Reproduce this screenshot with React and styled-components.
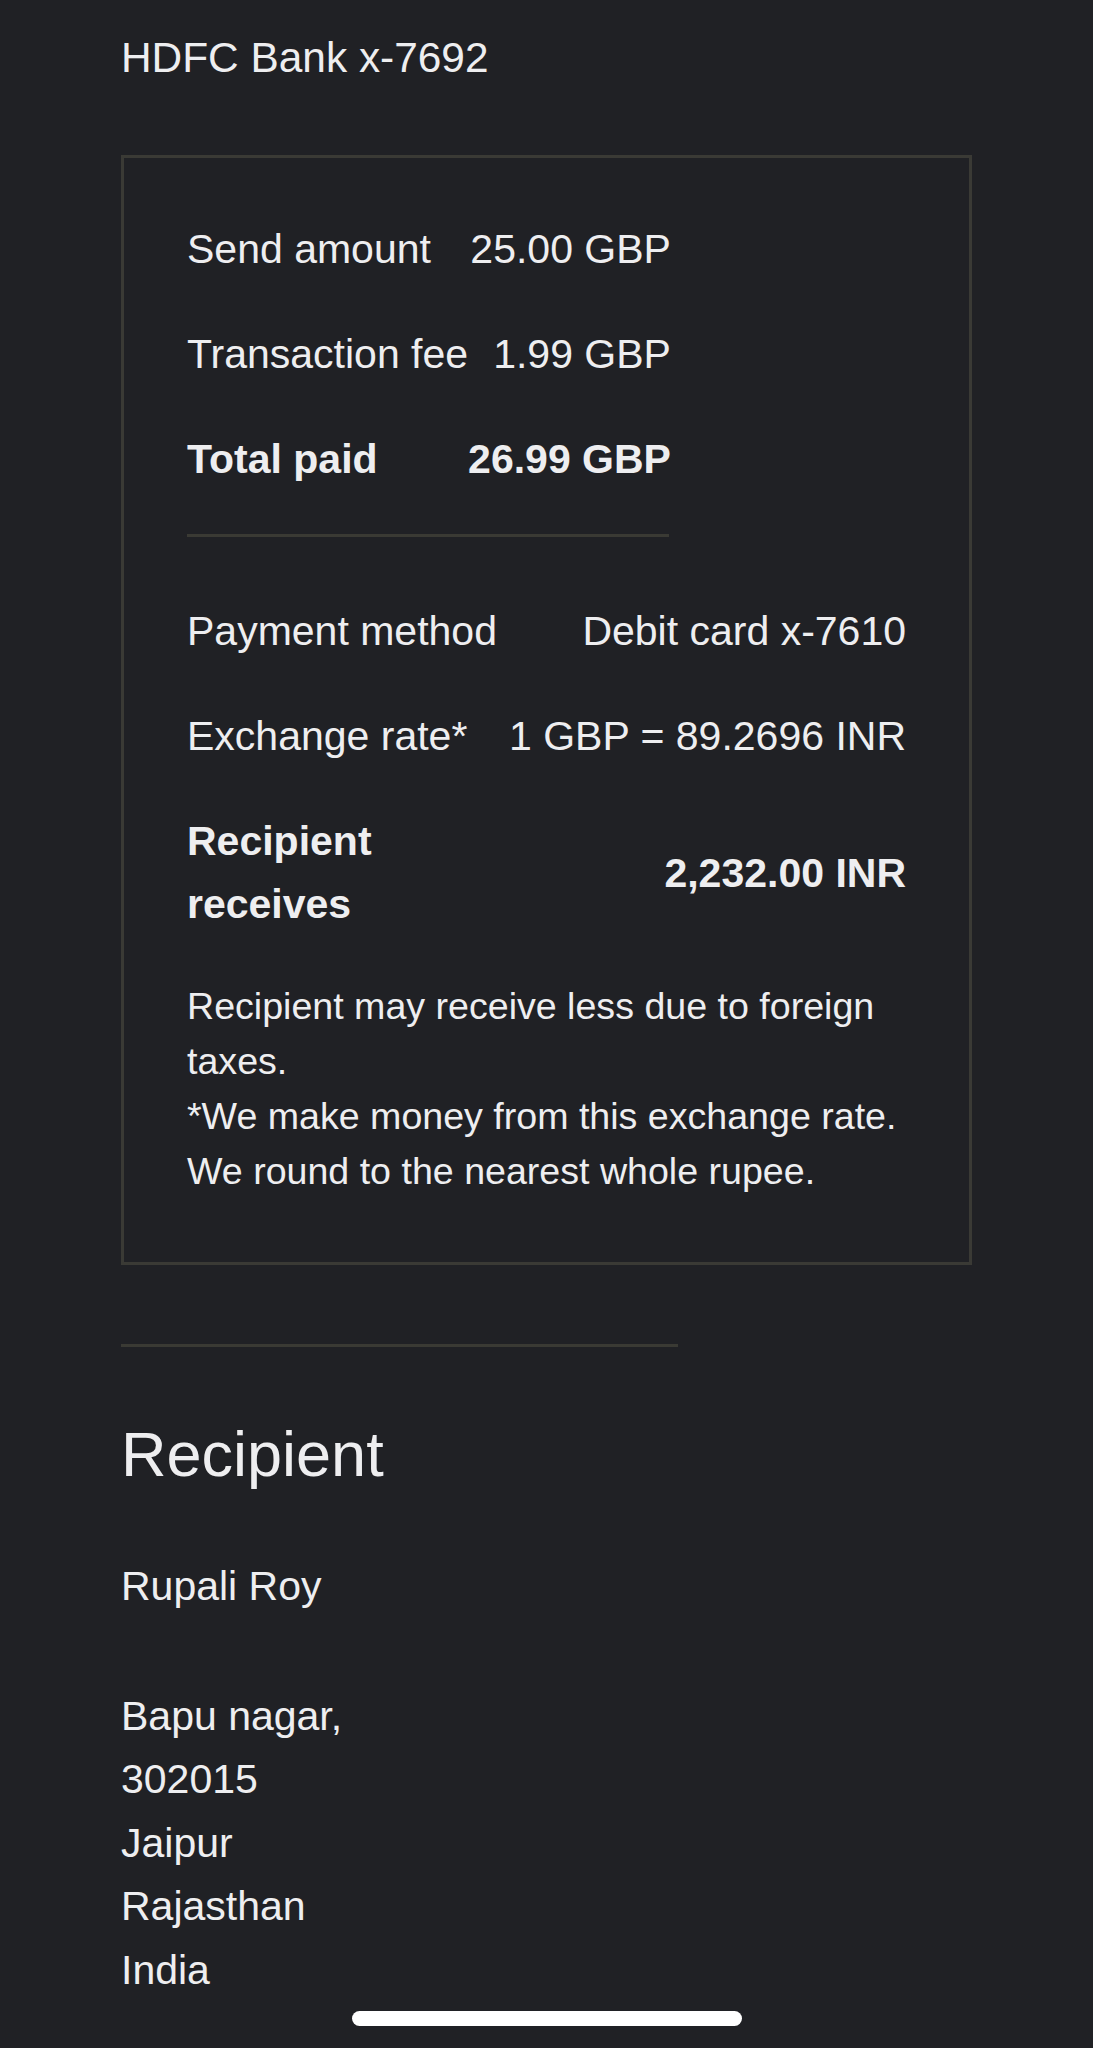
import { Fragment } from "react";
import styled, { createGlobalStyle } from "styled-components";

const GlobalStyle = createGlobalStyle`
  html, body {
    margin: 0;
    background: #202125;
  }
  body {
    color: #eeeef0;
    font-family: "Liberation Sans", Arial, sans-serif;
    font-size: 41px;
    line-height: 63px;
  }
`;

const Page = styled.div`
  padding: 26px 121px 48px;
`;

const BankName = styled.div`
  font-size: 42.4px;
  line-height: 63px;
`;

const SummaryBox = styled.section`
  box-sizing: border-box;
  width: 851px;
  margin-top: 66px;
  border: 3px solid #3a3a35;
  padding: 60px 63px 63px;
`;

const AmountGrid = styled.div`
  display: grid;
  grid-template-columns: ${(p) => p.$cols || "auto 1fr"};
  width: ${(p) => p.$width}px;
  row-gap: 42px;
  align-items: center;
  line-height: 63px;
`;

const Label = styled.div`
  font-weight: ${(p) => (p.$bold ? 700 : 400)};
  white-space: ${(p) => (p.$wrap ? "normal" : "nowrap")};
`;

const Value = styled.div`
  text-align: right;
  white-space: nowrap;
  font-weight: ${(p) => (p.$bold ? 700 : 400)};
`;

const Rule = styled.hr`
  border: 0;
  height: 3px;
  background: #3a3a34;
  width: ${(p) => p.$width}px;
  margin: ${(p) => p.$margin};
`;

const Notes = styled.p`
  width: 719px;
  margin: 43px 0 0;
  font-size: 37.6px;
  line-height: 55px;
`;

const Heading = styled.h2`
  margin: 70px 0 0;
  font-size: 63px;
  line-height: 75px;
  font-weight: 400;
`;

const Name = styled.div`
  margin-top: 63px;
`;

const Address = styled.address`
  margin-top: 67px;
  font-style: normal;
  line-height: 63.4px;
`;

const HomeIndicator = styled.div`
  position: fixed;
  left: 352px;
  bottom: 22px;
  width: 390px;
  height: 15px;
  border-radius: 8px;
  background: #ffffff;
`;

const amounts = [
  { label: "Send amount", value: "25.00 GBP" },
  { label: "Transaction fee", value: "1.99 GBP" },
  { label: "Total paid", value: "26.99 GBP", bold: true },
];

const details = [
  { label: "Payment method", value: "Debit card x-7610" },
  { label: "Exchange rate*", value: "1 GBP = 89.2696 INR" },
  { label: "Recipient receives", value: "2,232.00 INR", bold: true },
];

const address = ["Bapu nagar,", "302015", "Jaipur", "Rajasthan", "India"];

export default function App() {
  return (
    <>
      <GlobalStyle />
      <Page>
        <BankName>HDFC Bank x-7692</BankName>

        <SummaryBox>
          <AmountGrid $width={482}>
            {amounts.map((row) => (
              <Fragment key={row.label}>
                <Label $bold={row.bold}>{row.label}</Label>
                <Value $bold={row.bold}>{row.value}</Value>
              </Fragment>
            ))}
          </AmountGrid>

          <Rule $width={482} $margin="43px 0 63px" />

          <AmountGrid $width={719} $cols="318px 1fr">
            {details.map((row) => (
              <Fragment key={row.label}>
                <Label $bold={row.bold} $wrap>
                  {row.label}
                </Label>
                <Value $bold={row.bold}>{row.value}</Value>
              </Fragment>
            ))}
          </AmountGrid>

          <Notes>
            Recipient may receive less due to foreign taxes.
            <br />
            *We make money from this exchange rate. We round to the nearest
            whole rupee.
          </Notes>
        </SummaryBox>

        <Rule $width={557} $margin="79px 0 0" />

        <Heading>Recipient</Heading>
        <Name>Rupali Roy</Name>
        <Address>
          {address.map((line) => (
            <div key={line}>{line}</div>
          ))}
        </Address>
      </Page>
      <HomeIndicator />
    </>
  );
}
